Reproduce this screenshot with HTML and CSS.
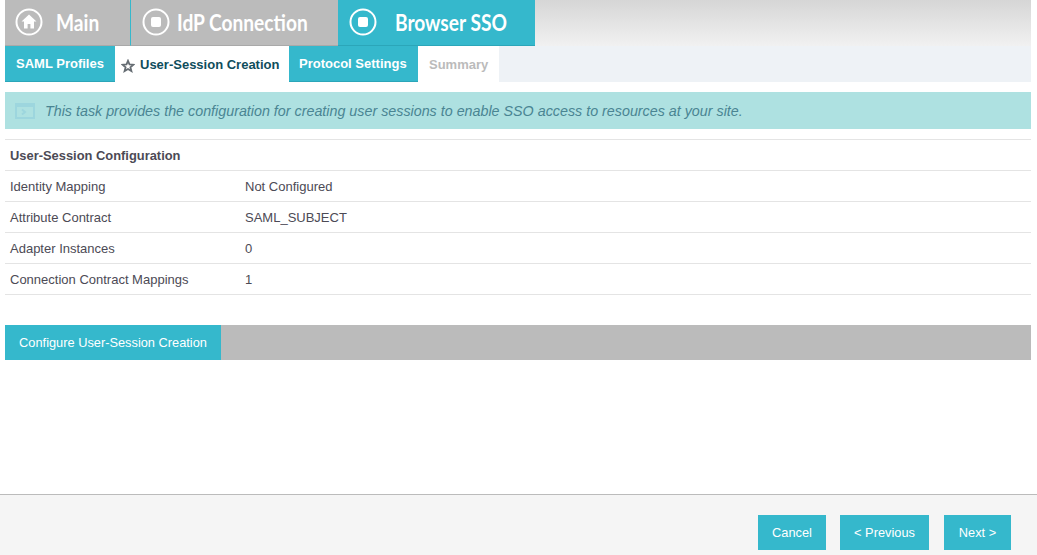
FILE: index.html
```html
<!DOCTYPE html>
<html lang="en">
<head>
<meta charset="utf-8">
<title>Browser SSO</title>
<link rel="stylesheet" href="styles.css">
</head>
<body>
<div class="page">
  <main class="content">
    <nav class="crumbs">
      <a class="crumb crumb-main"><svg class="crumb-icon" viewBox="0 0 28 28"><circle cx="14" cy="14" r="12.5" fill="none" stroke="#fff" stroke-width="2"/><path d="M14 6.5 6.500 13.500H9v7h3.600v-4.600h2.800v4.600H19v-7h2.500z" fill="#fff"/></svg><span class="crumb-text">Main</span></a>
      <a class="crumb crumb-idp"><svg class="crumb-icon" viewBox="0 0 28 28"><circle cx="14" cy="14" r="12.500" fill="none" stroke="#fff" stroke-width="2"/><rect x="9" y="9" width="10" height="10" rx="2" fill="#fff"/></svg><span class="crumb-text">IdP Connection</span></a>
      <a class="crumb crumb-active"><svg class="crumb-icon" viewBox="0 0 28 28"><circle cx="14" cy="14" r="12.500" fill="none" stroke="#fff" stroke-width="2"/><rect x="9" y="9" width="10" height="10" rx="2" fill="#fff"/></svg><span class="crumb-text">Browser SSO</span></a>
    </nav>
    <nav class="tabs">
      <a class="tab tab-link tab-saml">SAML Profiles</a>
      <a class="tab tab-current"><svg class="star" viewBox="0 0 14 14"><path d="M7 1.800 8.500 5.400 12.400 5.700 9.400 8.200 10.400 12 7 10 3.600 12 4.600 8.200 1.600 5.700 5.500 5.400z" fill="#fff" stroke="#666d73" stroke-width="1.800"/></svg>User-Session Creation</a>
      <a class="tab tab-link tab-protocol">Protocol Settings</a>
      <a class="tab tab-disabled">Summary</a>
    </nav>
    <div class="message">
      <svg class="message-icon" viewBox="0 0 20 16"><rect x="1" y="1" width="18" height="14" fill="none" stroke="#9dd6de" stroke-width="2"/><rect x="1" y="1" width="18" height="3" fill="#9dd6de"/><path d="M7 6.500 10 9 7 11.500" fill="none" stroke="#9dd6de" stroke-width="2"/></svg>
      <span>This task provides the configuration for creating user sessions to enable SSO access to resources at your site.</span>
    </div>
    <section class="summary">
      <div class="row row-head">User-Session Configuration</div>
      <div class="row"><span class="label">Identity Mapping</span><span>Not Configured</span></div>
      <div class="row"><span class="label">Attribute Contract</span><span>SAML_SUBJECT</span></div>
      <div class="row"><span class="label">Adapter Instances</span><span>0</span></div>
      <div class="row"><span class="label">Connection Contract Mappings</span><span>1</span></div>
    </section>
    <div class="action-bar"><a class="action">Configure User-Session Creation</a></div>
  </main>
  <footer class="footer">
    <a class="btn btn-cancel">Cancel</a>
    <a class="btn btn-prev">&lt; Previous</a>
    <a class="btn btn-next">Next &gt;</a>
  </footer>
</div>
</body>
</html>
```
FILE: styles.css
```css
* { box-sizing: border-box; }
html, body { margin: 0; height: 100%; }
body { font-family: "Liberation Sans", Arial, sans-serif; font-size: 12px; color: #4c4a55; background: #fff; overflow: hidden; }
.page { height: 555px; display: flex; flex-direction: column; }
.content { flex: 1; padding: 0 6px 0 5px; }

.crumbs { display: flex; height: 46px; background: linear-gradient(#d6d6d6, #f1f1f1); }
.crumb { height: 46px; display: flex; align-items: center; color: #fff; font-family: Lato, "Liberation Sans", sans-serif; font-weight: 700; font-size: 22px; background: #bbb; border-bottom: 1px solid #a9a9a9; white-space: nowrap; }
.crumb-icon { width: 28px; height: 28px; flex: none; margin-bottom: 1px; }
.crumb-text { display: inline-block; transform: scaleX(.87); transform-origin: left center; }
.crumb-main { width: 126px; padding-left: 10px; border-right: 1px solid #35b8cc; }
.crumb-main .crumb-text { margin-left: 13px; }
.crumb-idp { width: 207px; padding-left: 11px; }
.crumb-idp .crumb-text { margin-left: 7px; }
.crumb-active { width: 197px; padding-left: 11px; background: #35b8cc; border-bottom-color: #2ba6b9; }
.crumb-active .crumb-text { margin-left: 18px; }

.tabs { display: flex; height: 36px; background: #eef2f6; }
.tab { display: flex; align-items: center; font-weight: 700; font-size: 13px; height: 36px; }
.tab-link { background: #35b8cc; color: #fff; border-bottom: 1px solid #2ba6b9; padding-bottom: 1px; }
.tab-saml { width: 110px; padding-left: 11px; }
.tab-current { width: 174px; padding-left: 6px; background: #fff; color: #0f4d5c; padding-top: 1px; }
.star { width: 14px; height: 14px; margin-right: 5px; margin-top: 2px; }
.tab-protocol { width: 129px; padding-left: 10px; }
.tab-disabled { width: 81px; padding-left: 11px; background: #fff; color: #bbb; padding-top: 1px; }

.message { margin-top: 10px; height: 37px; background: #aee1e1; display: flex; align-items: center; padding-left: 10px; font-size: 14.3px; font-style: italic; color: #4a8593; }
.message-icon { width: 20px; height: 16px; margin-right: 10px; flex: none; }

.summary { margin-top: 10px; border-top: 1px solid #e4e4e4; }
.row { height: 31px; display: flex; align-items: center; padding: 1px 0 0 5px; border-bottom: 1px solid #e4e4e4; font-size: 13px; }
.row-head { font-weight: 700; font-size: 12.9px; }
.label { width: 235px; }

.action-bar { margin-top: 30px; height: 35px; background: #bbb; display: flex; font-size: 12.8px; }
.action { width: 216px; background: #35b8cc; color: #fff; display: flex; align-items: center; justify-content: center; }

.footer { height: 61px; background: #f5f5f5; border-top: 1px solid #bbb; display: flex; padding: 20px 26px 0 0; justify-content: flex-end; align-items: flex-start; font-size: 12.8px; }
.btn { height: 35px; background: #35b8cc; color: #fff; display: flex; align-items: center; justify-content: center; }
.btn-cancel { width: 68px; }
.btn-prev { width: 89px; margin-left: 14px; }
.btn-next { width: 67px; margin-left: 15px; }
```
